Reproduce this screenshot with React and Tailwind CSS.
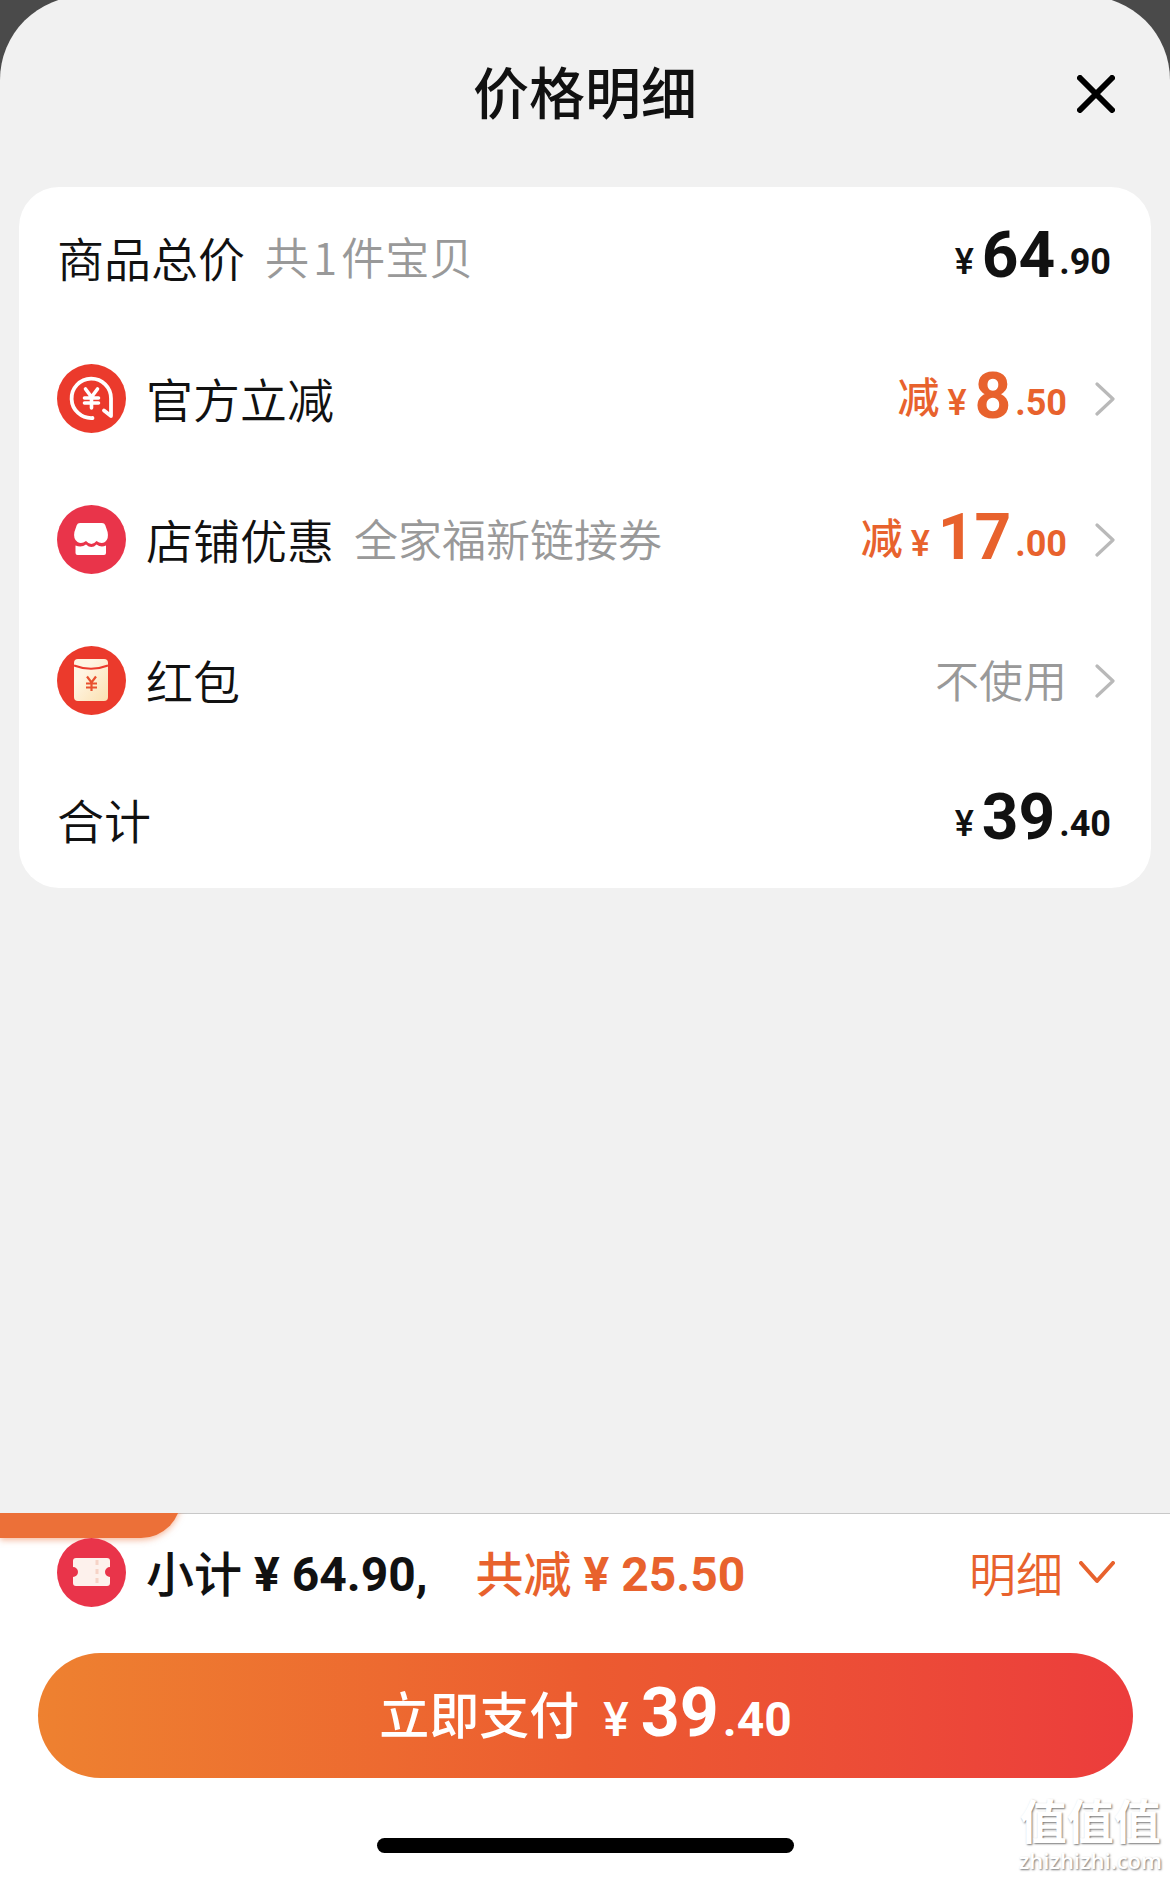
import React from 'react';

const Yen = ({ x, y, color, width }) => (
  <path
    d={`M${x - 6} ${y - 9}l6 8l6 -8M${x - 7} ${y}h14M${x - 7} ${y + 5}h14M${x} ${y - 1}v11`}
    fill="none"
    stroke={color}
    strokeWidth={width}
    strokeLinecap="round"
    strokeLinejoin="round"
  />
);

const DiscountIcon = () => (
  <svg viewBox="0 0 69 69" className="size-[69px] shrink-0" aria-hidden="true">
    <circle cx="34.5" cy="34.5" r="34.5" fill="#eb3a2c" />
    <path
      d="M35.5 54A19.7 19.7 0 1 1 54 34.5V52L47 46.5"
      fill="none"
      stroke="#fff"
      strokeWidth="3.8"
      strokeLinecap="round"
      strokeLinejoin="round"
    />
    <Yen x={34.5} y={34} color="#fff" width={3.6} />
  </svg>
);

const ShopIcon = () => (
  <svg viewBox="0 0 69 69" className="size-[69px] shrink-0" aria-hidden="true">
    <circle cx="34.5" cy="34.5" r="34.5" fill="#e9344a" />
    <path
      d="M23 18H45Q47.500 18 48.300 20.300L50.600 27Q52 34 48 37Q44 39.500 39.500 36Q34.500 42 29 36Q24.500 39.500 20.500 37Q16 34 17.400 27L19.700 20.300Q20.500 18 23 18Z"
      fill="#fff"
    />
    <path
      d="M18.500 40.500Q24.500 43 29 39.500Q34.500 44.500 39.500 39.500Q44 43 49 40.500V48Q49 50 47 50H20.500Q18.500 50 18.500 48Z"
      fill="#fff"
    />
  </svg>
);

const RedPacketIcon = () => (
  <svg viewBox="0 0 69 69" className="size-[69px] shrink-0" aria-hidden="true">
    <defs>
      <linearGradient id="packet" x1="0" y1="0" x2="1" y2="1">
        <stop offset="0.3" stopColor="#fff5e2" />
        <stop offset="1" stopColor="#fbe0b0" />
      </linearGradient>
    </defs>
    <circle cx="34.5" cy="34.5" r="34.5" fill="#eb3a2c" />
    <rect x="17" y="13" width="34" height="42" rx="4" fill="url(#packet)" />
    <path d="M17 19.500Q34 26 51 19.500" fill="none" stroke="#eb3a2c" strokeWidth="2" />
    <path
      d="M30 30.500l4.500 6l4.500 -6M29 37.500h11M29 41.500h11M34.500 36.500v8.500"
      fill="none"
      stroke="#e8502f"
      strokeWidth="2.2"
    />
  </svg>
);

const CouponIcon = () => (
  <svg viewBox="0 0 69 69" className="size-[69px] shrink-0" aria-hidden="true">
    <circle cx="34.5" cy="34.5" r="34.5" fill="#e9344a" />
    <path
      d="M19 20H50Q53 20 53 23V29A5 5 0 0 0 53 39V45Q53 48 50 48H19Q16 48 16 45V39A5 5 0 0 0 16 29V23Q16 20 19 20Z"
      fill="#fdf1ec"
    />
    <path d="M40 22V47" stroke="#f6d3c6" strokeWidth="3" strokeDasharray="5 4" />
  </svg>
);

const ChevronRight = () => (
  <svg viewBox="0 0 20 34" className="h-[34px] w-5 shrink-0" aria-hidden="true">
    <path d="M2 2L18 17L2 32" fill="none" stroke="#b9b9b9" strokeWidth="3.2" strokeLinecap="round" strokeLinejoin="round" />
  </svg>
);

// Currency sign and cents are smaller than the whole yuan
const Price = ({ yuan, cents }) => (
  <span className="flex items-end pb-1 leading-none font-['Roboto','Noto_Sans_CJK_SC',sans-serif] font-bold">
    <span className="mb-2 text-[36px] font-medium">¥</span>
    <span className="ml-2 text-[64px]">{yuan}</span>
    <span className="mb-2 ml-1 text-[36px]">.{cents}</span>
  </span>
);

const rowClass = 'flex h-[141px] w-full items-center text-left';
const labelClass = 'text-[47px] font-[350]';
const noteClass = 'pb-1 text-[44px] font-[350] text-[#999]';

const discounts = [
  { label: '官方立减', Icon: DiscountIcon, yuan: '8', cents: '50' },
  { label: '店铺优惠', note: '全家福新链接券', Icon: ShopIcon, yuan: '17', cents: '00' },
  { label: '红包', Icon: RedPacketIcon },
];

const DiscountRow = ({ label, note, Icon, yuan, cents }) => (
  <button type="button" className={rowClass}>
    <Icon />
    <span className={`ml-5 ${labelClass}`}>{label}</span>
    {note && <span className={`ml-5 ${noteClass}`}>{note}</span>}
    <span className="ml-auto flex items-center text-[#e8622d]">
      {yuan ? (
        <>
          <span className="mr-2 pb-2 text-[42px] font-medium">减</span>
          <Price yuan={yuan} cents={cents} />
        </>
      ) : (
        <span className={noteClass}>不使用</span>
      )}
    </span>
    <span className="ml-7">
      <ChevronRight />
    </span>
  </button>
);

const App = () => {
  return (
    <div className="flex min-h-screen flex-col overflow-hidden bg-[#4a4a4a] font-['Noto_Sans_CJK_SC',sans-serif] text-[#111]">
      <main className="-mt-1 flex-1 rounded-t-[84px] bg-[#f1f1f1] px-[19px] pt-1">
        <header className="grid h-[187px] grid-cols-[1fr_auto_1fr] items-center px-9">
          <h1 className="col-start-2 pb-2 text-[56px] font-medium">价格明细</h1>
          <button type="button" aria-label="关闭" className="justify-self-end">
            <svg viewBox="0 0 38 38" className="size-[38px]" aria-hidden="true">
              <path d="M3 3L35 35M35 3L3 35" stroke="#000" strokeWidth="6" strokeLinecap="round" />
            </svg>
          </button>
        </header>

        <section className="rounded-[40px] bg-white pr-9 pl-[38px]">
          <div className={rowClass}>
            <span className={labelClass}>商品总价</span>
            <span className={`ml-5 ${noteClass}`}>
              共<span className="mx-1">1</span>件宝贝
            </span>
            <span className="mr-1 ml-auto">
              <Price yuan="64" cents="90" />
            </span>
          </div>
          {discounts.map((item) => (
            <DiscountRow key={item.label} {...item} />
          ))}
          <div className="flex h-[137px] w-full items-center">
            <span className={labelClass}>合计</span>
            <span className="mr-1 ml-auto">
              <Price yuan="39" cents="40" />
            </span>
          </div>
        </section>
      </main>

      <footer className="relative border-t border-[#c8c8c8] bg-white pt-6 pr-[37px] pb-6 pl-[38px]">
        {/* Edge of the floating tag behind the bar */}
        <div className="absolute -top-px left-0 flex h-[35px] w-[192px] items-end overflow-hidden pb-[10px]">
          <div className="h-[60px] w-[181px] shrink-0 rounded-br-[40px] bg-[#ec7038] shadow-[0_2px_6px_rgba(236,112,56,0.5)]" />
        </div>

        <div className="relative flex h-[69px] items-center px-[18px] pl-[19px] text-[48px] font-medium">
          <CouponIcon />
          <span className="ml-5 pb-1">小计</span>
          <span className="ml-3 pt-1 font-['Roboto','Noto_Sans_CJK_SC',sans-serif] font-bold">¥ 64.90,</span>
          <span className="ml-12 pb-1 text-[#e8622d]">共减</span>
          <span className="ml-3 pt-1 font-['Roboto','Noto_Sans_CJK_SC',sans-serif] font-bold text-[#e8622d]">¥ 25.50</span>
          <button type="button" className="ml-auto flex items-center gap-4 text-[47px] font-[350] text-[#e8622d]">
            <span>明细</span>
            <svg viewBox="0 0 36 24" className="h-6 w-9" aria-hidden="true">
              <path d="M2 2L18 20L34 2" fill="none" stroke="#e8622d" strokeWidth="4" strokeLinecap="round" strokeLinejoin="round" />
            </svg>
          </button>
        </div>

        <button
          type="button"
          className="mt-[46px] flex h-[125px] w-full items-center justify-center rounded-full bg-linear-to-r from-[#ee8130] via-[#ec5b30] to-[#ec3c3c] pb-1.5 text-white"
        >
          <span className="text-[50px] font-medium">立即支付</span>
          <span className="ml-6 flex items-baseline leading-none font-['Roboto','Noto_Sans_CJK_SC',sans-serif] font-bold">
            <span className="text-[48px] font-medium">¥</span>
            <span className="ml-3 text-[68px]">39</span>
            <span className="ml-1 text-[48px]">.40</span>
          </span>
        </button>

        <div className="mx-auto mt-[60px] h-[15px] w-[417px] rounded-full bg-black" />

        <div className="absolute right-2 bottom-1 flex flex-col items-center text-white [text-shadow:1px_1px_2px_#777]">
          <span className="text-[47px] leading-[56px] font-bold">值值值</span>
          <span className="font-['Open_Sans',sans-serif] text-[22px] leading-[26px] font-semibold">zhizhizhi.com</span>
        </div>
      </footer>
    </div>
  );
};

export default App;
